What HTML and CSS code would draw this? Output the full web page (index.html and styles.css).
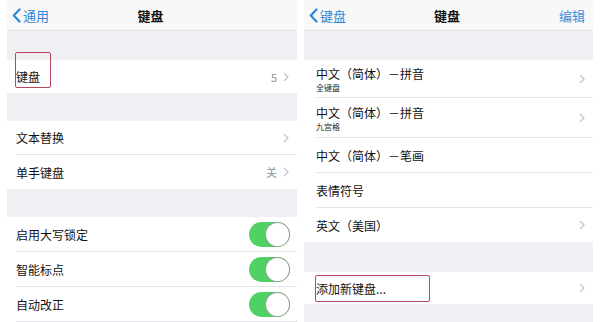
FILE: index.html
```html
<!DOCTYPE html>
<html lang="zh">
<head>
<meta charset="utf-8">
<link rel="stylesheet" href="styles.css">
</head>
<body>
<div class="screen left">
  <div class="nav">
    <div class="back"><svg class="bchev" width="9" height="15" viewBox="0 0 9 15"><polyline points="7.5,1.5 1.8,7.5 7.5,13.5" fill="none" stroke="#2f86d6" stroke-width="2.2" stroke-linecap="round" stroke-linejoin="round"/></svg><span>通用</span></div>
    <div class="title">键盘</div>
    <div class="action"></div>
  </div>
  <div class="gap g29"></div>
  <div class="group">
    <div class="row h33 last"><span class="label">键盘</span><span class="val">5</span><svg class="chev" width="6" height="10" viewBox="0 0 6 10"><polyline points="1,1 5,5 1,9" fill="none" stroke="#c4c4c9" stroke-width="1.3"/></svg></div>
  </div>
  <div class="gap g28"></div>
  <div class="group">
    <div class="row h34"><span class="label">文本替换</span><svg class="chev" width="6" height="10" viewBox="0 0 6 10"><polyline points="1,1 5,5 1,9" fill="none" stroke="#c4c4c9" stroke-width="1.3"/></svg></div>
    <div class="row h34 last"><span class="label">单手键盘</span><span class="val">关</span><svg class="chev" width="6" height="10" viewBox="0 0 6 10"><polyline points="1,1 5,5 1,9" fill="none" stroke="#c4c4c9" stroke-width="1.3"/></svg></div>
  </div>
  <div class="gap g28"></div>
  <div class="group">
    <div class="row h35"><span class="label">启用大写锁定</span><span class="toggle"><span class="knob"></span></span></div>
    <div class="row h35"><span class="label">智能标点</span><span class="toggle"><span class="knob"></span></span></div>
    <div class="row h35"><span class="label">自动改正</span><span class="toggle"><span class="knob"></span></span></div>
  </div>
  <div class="mark mark-left"></div>
</div>

<div class="screen right">
  <div class="nav">
    <div class="back"><svg class="bchev" width="9" height="15" viewBox="0 0 9 15"><polyline points="7.5,1.5 1.8,7.5 7.5,13.5" fill="none" stroke="#2f86d6" stroke-width="2.2" stroke-linecap="round" stroke-linejoin="round"/></svg><span>键盘</span></div>
    <div class="title">键盘</div>
    <div class="action">编辑</div>
  </div>
  <div class="gap g29"></div>
  <div class="group">
    <div class="row h38"><span class="two"><span class="label">中文（简体）－拼音</span><span class="sub">全键盘</span></span><svg class="chev" width="6" height="10" viewBox="0 0 6 10"><polyline points="1,1 5,5 1,9" fill="none" stroke="#c4c4c9" stroke-width="1.3"/></svg></div>
    <div class="row h40"><span class="two"><span class="label">中文（简体）－拼音</span><span class="sub">九宫格</span></span><svg class="chev" width="6" height="10" viewBox="0 0 6 10"><polyline points="1,1 5,5 1,9" fill="none" stroke="#c4c4c9" stroke-width="1.3"/></svg></div>
    <div class="row h35"><span class="label">中文（简体）－笔画</span></div>
    <div class="row h35"><span class="label">表情符号</span></div>
    <div class="row h34 last"><span class="label">英文（美国）</span><svg class="chev" width="6" height="10" viewBox="0 0 6 10"><polyline points="1,1 5,5 1,9" fill="none" stroke="#c4c4c9" stroke-width="1.3"/></svg></div>
  </div>
  <div class="gap g30"></div>
  <div class="group">
    <div class="row h32 last"><span class="label">添加新键盘...</span><svg class="chev" width="6" height="10" viewBox="0 0 6 10"><polyline points="1,1 5,5 1,9" fill="none" stroke="#c4c4c9" stroke-width="1.3"/></svg></div>
  </div>
  <div class="gap fill"></div>
  <div class="mark mark-right"></div>
</div>
</body>
</html>
```

FILE: styles.css
```css
html, body {
  margin: 0;
  padding: 0;
  background: #ffffff;
}
body {
  width: 600px;
  height: 322px;
  overflow: hidden;
  display: flex;
  font-family: "Noto Sans CJK SC", "Noto Sans", sans-serif;
  color: #111;
}
.screen {
  position: relative;
  display: flex;
  flex-direction: column;
  background: #ffffff;
}
.left {
  margin-left: 7px;
  width: 290px;
}
.right {
  margin-left: 7px;
  width: 289px;
}
.nav {
  height: 31px;
  flex: none;
  display: flex;
  align-items: center;
  justify-content: space-between;
  background: #f8f8f9;
  border-bottom: 1px solid #e2e2e6;
  box-sizing: border-box;
  padding: 0 8px 0 5px;
  position: relative;
}
.back {
  display: flex;
  align-items: center;
  gap: 2px;
  color: #2f86d6;
  font-size: 13px;
  width: 60px;
}
.title {
  font-size: 13px;
  font-weight: 700;
  color: #111;
}
.action {
  width: 60px;
  text-align: right;
  color: #3a8fd8;
  font-size: 13px;
}
.gap {
  flex: none;
  background: #efeff4;
}
.g28 { height: 28px; }
.g29 { height: 29px; }
.g30 { height: 30px; }
.fill { flex: 1; }
.group {
  background: #ffffff;
  padding-left: 9px;
  flex: none;
}
.right .group { padding-left: 12px; }
.row {
  display: flex;
  align-items: center;
  box-sizing: border-box;
  padding-right: 7px;
  border-bottom: 1px solid #e4e4e8;
  gap: 6px;
}
.row.last { border-bottom: none; }
.h32 { height: 32px; }
.h33 { height: 33px; }
.h34 { height: 34px; }
.h35 { height: 35px; }
.h38 { height: 38px; }
.h40 { height: 40px; }
.label {
  font-size: 12px;
  flex: 1;
  white-space: nowrap;
}
.two {
  flex: 1;
  display: flex;
  flex-direction: column;
}
.two .label {
  flex: none;
  line-height: 17px;
}
.sub {
  font-size: 8px;
  line-height: 11px;
  color: #222;
}
.val {
  font-size: 11px;
  color: #8e8e93;
}
.chev { flex: none; margin-right: 1px; }
.toggle {
  width: 41px;
  height: 25px;
  border-radius: 13px;
  background: #4fd163;
  position: relative;
  flex: none;
}
.knob {
  position: absolute;
  right: 1px;
  top: 1px;
  width: 23px;
  height: 23px;
  border-radius: 50%;
  background: #ffffff;
  box-shadow: 0 0 0 1px #9aa09c;
}
.mark {
  position: absolute;
  border: 1.5px solid #b5485c;
  border-radius: 2px;
  box-sizing: border-box;
}
.mark-left {
  left: 8px;
  top: 52px;
  width: 36px;
  height: 36px;
}
.mark-right {
  left: 11px;
  top: 275px;
  width: 115px;
  height: 27px;
}
```
